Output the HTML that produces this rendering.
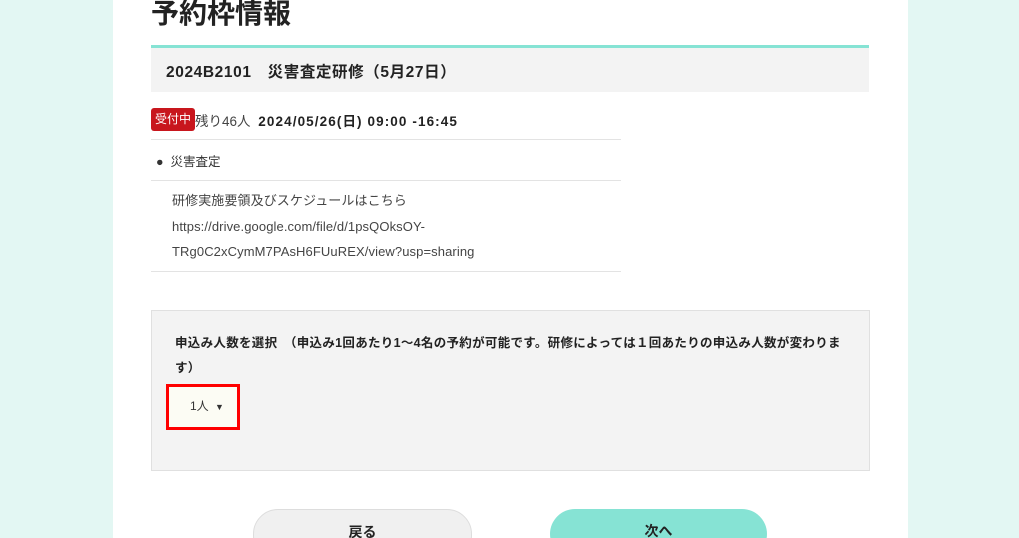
<!DOCTYPE html>
<html style="height:538px;overflow:hidden"><head><meta charset="utf-8"><style>
body{margin:0;width:1019px;height:538px;overflow:hidden;background:#e3f7f3;font-family:"Liberation Sans","Noto Sans CJK JP",sans-serif;color:#222;position:relative}
.card{position:absolute;left:113px;top:0;width:795px;height:538px;background:#fff}
.a{position:absolute;white-space:nowrap}
</style></head><body>
<div class="card"></div>
<div class="a" style="left:151px;top:-8px;font-size:28px;font-weight:bold;color:#222">予約枠情報</div>
<div class="a" style="left:151px;top:45px;width:718px;height:3px;background:#86e3d4"></div>
<div class="a" style="left:151px;top:48px;width:718px;height:44px;background:#f3f3f3"></div>
<div class="a" style="left:166px;top:60px;font-size:15.5px;font-weight:bold;letter-spacing:0.6px">2024B2101　災害査定研修（5月27日）</div>
<div class="a" style="left:151px;top:108px;width:44px;height:23px;background:#c8161d;border-radius:3px;color:#fff;font-size:12px;line-height:22px;text-align:center">受付中</div>
<div class="a" style="left:195px;top:110px;font-size:13.5px;color:#444">残り46人 <b style="color:#222;margin-left:4px;letter-spacing:1.1px">2024/05/26(日) 09:00 -16:45</b></div>
<div class="a" style="left:151px;top:139px;width:470px;height:1px;background:#e3e3e3"></div>
<div class="a" style="left:156px;top:151px;font-size:12.5px;color:#333">●&nbsp; 災害査定</div>
<div class="a" style="left:151px;top:180px;width:470px;height:1px;background:#e3e3e3"></div>
<div class="a" style="left:172px;top:188px;font-size:13px;color:#444;line-height:25.5px;letter-spacing:0.1px;white-space:normal;width:440px">研修実施要領及びスケジュールはこちら<br>https://drive.google.com/file/d/1psQOksOY-<br>TRg0C2xCymM7PAsH6FUuREX/view?usp=sharing</div>
<div class="a" style="left:151px;top:271px;width:470px;height:1px;background:#e3e3e3"></div>
<div class="a" style="left:151px;top:310px;width:717px;height:159px;background:#f3f3f3;border:1px solid #e0e0e0"></div>
<div class="a" style="left:175px;top:331px;font-size:12.5px;font-weight:bold;line-height:25px;letter-spacing:0.3px;white-space:normal;width:672px">申込み人数を選択　（申込み1回あたり1～4名の予約が可能です。研修によっては１回あたりの申込み人数が変わります）</div>
<div class="a" style="left:166px;top:384px;width:68px;height:40px;border:3px solid #f00;background:#fcfcf4"></div>
<div class="a" style="left:190px;top:397px;font-size:12px;color:#333">1人 <span style="font-size:9px;margin-left:3px">▼</span></div>
<div class="a" style="left:253px;top:509px;width:217px;height:50px;border-radius:25px;background:#f0f0f0;border:1px solid #ddd;text-align:center;font-size:14px;font-weight:bold;line-height:44px">戻る</div>
<div class="a" style="left:550px;top:509px;width:217px;height:50px;border-radius:25px;background:#86e3d4;text-align:center;font-size:14px;font-weight:bold;line-height:44px">次へ</div>
</body></html>
